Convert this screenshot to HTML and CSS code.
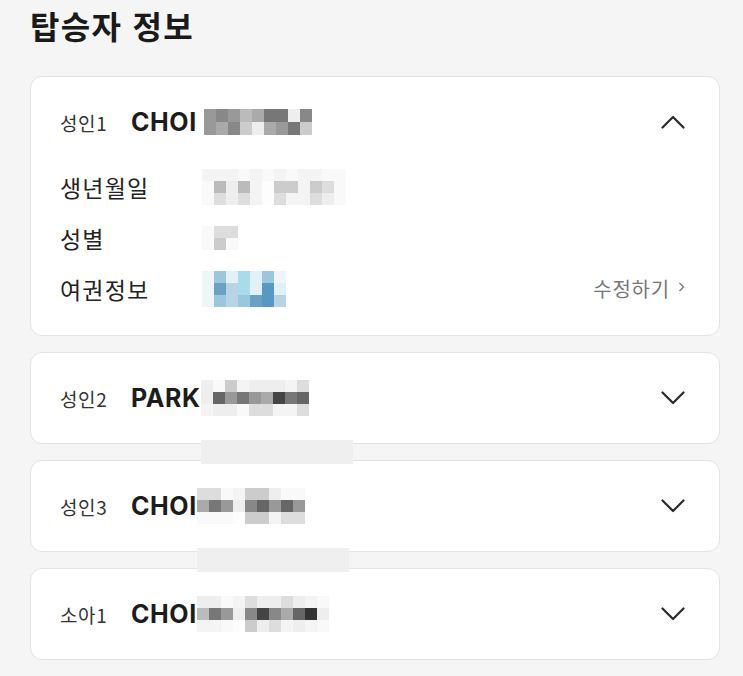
FILE: index.html
```html
<!DOCTYPE html>
<html lang="ko">
<head>
    <meta charset="UTF-8">
    <meta name="viewport" content="width=device-width, initial-scale=1.0">
    <title>탑승자 정보</title>
    <link rel="stylesheet" href="styles.css">
</head>
<body>
    <div class="page">
        <h1>탑승자 정보</h1>

        <div class="passengers">
            <div class="card open">
                <div class="cardHead">
                    <span class="type">성인1</span>
                    <span class="name">CHOI</span>
                    <span class="mosaic m9 gap">
                        <i class="p9"></i><i class="p8"></i><i class="p9"></i><i class="pb"></i><i class="pa"></i><i class="p7"></i><i class="p7"></i><i class="pe"></i><i class="p8"></i>
                        <i class="p9"></i><i class="pa"></i><i class="p8"></i><i class="pc"></i><i class="pe"></i><i class="pa"></i><i class="p9"></i><i class="p7"></i><i class="pc"></i>
                    </span>
                    <svg class="chevron" viewBox="0 0 24 14"><polyline points="1.5,12.5 12,2 22.5,12.5"/></svg>
                </div>
                <div class="details">
                    <div class="row">
                        <span class="label">생년월일</span>
                        <span class="mosaic m12 rows3">
                            <i class="pf"></i><i class="pf"></i><i class="pf"></i><i class="pw"></i><i class="pf"></i><i class="pw"></i><i class="pf"></i><i class="pw"></i><i class="pf"></i><i class="pf"></i><i class="pw"></i><i class="pw"></i>
                            <i class="pw"></i><i class="pb"></i><i class="pe"></i><i class="pb"></i><i class="pf"></i><i class="pww"></i><i class="pc"></i><i class="pc"></i><i class="pf"></i><i class="pc"></i><i class="pd"></i><i class="pw"></i>
                            <i class="pw"></i><i class="pd"></i><i class="pe"></i><i class="pd"></i><i class="pf"></i><i class="pww"></i><i class="pd"></i><i class="pf"></i><i class="pf"></i><i class="pd"></i><i class="pe"></i><i class="pw"></i>
                        </span>
                    </div>
                    <div class="row">
                        <span class="label">성별</span>
                        <span class="mosaic m3">
                            <i class="pw"></i><i class="pd"></i><i class="pd"></i>
                            <i class="pw"></i><i class="pc"></i><i class="pw"></i>
                        </span>
                    </div>
                    <div class="row">
                        <span class="label">여권정보</span>
                        <span class="mosaic m7 rows3">
                            <i class="b0"></i><i class="b2"></i><i class="b1"></i><i class="b3"></i><i class="b1"></i><i class="b2"></i><i class="b0"></i>
                            <i class="b0"></i><i class="b5"></i><i class="b4"></i><i class="b3"></i><i class="b1"></i><i class="b6"></i><i class="b1"></i>
                            <i class="b0"></i><i class="b2"></i><i class="b4"></i><i class="b2"></i><i class="b5"></i><i class="b6"></i><i class="b4"></i>
                        </span>
                        <a class="edit" href="#">수정하기
                            <svg viewBox="0 0 6 10"><polyline points="1,1 5,5 1,9"/></svg>
                        </a>
                    </div>
                </div>
            </div>

            <div class="card">
                <div class="cardHead">
                    <span class="type">성인2</span>
                    <span class="name">PARK</span>
                    <span class="mosaic m9 rows3 band">
                        <i class="pe"></i><i class="pw"></i><i class="pc"></i><i class="pf"></i><i class="pe"></i><i class="pe"></i><i class="pe"></i><i class="pf"></i><i class="pd"></i>
                        <i class="pe"></i><i class="p6"></i><i class="p9"></i><i class="p7"></i><i class="p9"></i><i class="pa"></i><i class="p4"></i><i class="p7"></i><i class="p6"></i>
                        <i class="pf"></i><i class="pe"></i><i class="pe"></i><i class="pw"></i><i class="pd"></i><i class="pd"></i><i class="pf"></i><i class="pf"></i><i class="pd"></i>
                    </span>
                    <svg class="chevron" viewBox="0 0 24 14"><polyline points="1.5,1.5 12,12 22.5,1.5"/></svg>
                </div>
            </div>

            <div class="card">
                <div class="cardHead">
                    <span class="type">성인3</span>
                    <span class="name">CHOI</span>
                    <span class="mosaic m9 rows3 band">
                        <i class="pd"></i><i class="pd"></i><i class="pw"></i><i class="pf"></i><i class="pc"></i><i class="pc"></i><i class="pe"></i><i class="pw"></i><i class="pw"></i>
                        <i class="pa"></i><i class="p7"></i><i class="p9"></i><i class="pe"></i><i class="p8"></i><i class="p6"></i><i class="p9"></i><i class="p6"></i><i class="p9"></i>
                        <i class="pw"></i><i class="pw"></i><i class="pw"></i><i class="pww"></i><i class="pc"></i><i class="pc"></i><i class="pf"></i><i class="pd"></i><i class="pd"></i>
                    </span>
                    <svg class="chevron" viewBox="0 0 24 14"><polyline points="1.5,1.5 12,12 22.5,1.5"/></svg>
                </div>
            </div>

            <div class="card">
                <div class="cardHead">
                    <span class="type">소아1</span>
                    <span class="name">CHOI</span>
                    <span class="mosaic m11 rows3">
                        <i class="pe"></i><i class="pe"></i><i class="pw"></i><i class="pf"></i><i class="pd"></i><i class="pe"></i><i class="pe"></i><i class="pd"></i><i class="pe"></i><i class="pf"></i><i class="pw"></i>
                        <i class="pb"></i><i class="p7"></i><i class="p9"></i><i class="pe"></i><i class="p8"></i><i class="p4"></i><i class="p8"></i><i class="pa"></i><i class="p6"></i><i class="p3"></i><i class="pe"></i>
                        <i class="pf"></i><i class="pf"></i><i class="pw"></i><i class="pww"></i><i class="pc"></i><i class="pe"></i><i class="pd"></i><i class="pf"></i><i class="pe"></i><i class="pf"></i><i class="pw"></i>
                    </span>
                    <svg class="chevron" viewBox="0 0 24 14"><polyline points="1.5,1.5 12,12 22.5,1.5"/></svg>
                </div>
            </div>
        </div>
    </div>
</body>
</html>
```

FILE: styles.css
```css
body {
    margin: 0;
    background-color: #f5f5f5;
    font-family: "Noto Sans CJK KR", "Noto Sans", sans-serif;
    color: #222;
}

.page {
    padding: 4px 23px 0 30px;
}

h1 {
    margin: 0;
    font-size: 32px;
    line-height: 42px;
    font-weight: 700;
    color: #1a1a1a;
    letter-spacing: 1.3px;
}

.passengers {
    margin-top: 30px;
    display: flex;
    flex-direction: column;
    gap: 16px;
}

.card {
    background-color: #fff;
    border: 1px solid #e3e3e3;
    border-radius: 12px;
    padding: 27px 34px 27px 29px;
}
.card.open {
    padding-bottom: 21px;
}

.cardHead {
    display: flex;
    align-items: center;
    height: 36px;
}

.type {
    width: 71px;
    font-size: 19px;
    letter-spacing: 0.6px;
    color: #333;
    flex-shrink: 0;
}

.name {
    font-family: Inter, "Liberation Sans", sans-serif;
    font-size: 25px;
    font-weight: 700;
    letter-spacing: 0.6px;
    color: #1c1c1c;
}

.chevron {
    margin-left: auto;
    width: 24px;
    height: 14px;
    fill: none;
    stroke: #2a2a2a;
    stroke-width: 2.2;
    stroke-linecap: round;
    stroke-linejoin: round;
}

/* blurred (mosaic) personal data */
.mosaic {
    display: inline-grid;
    grid-auto-rows: 13px;
    position: relative;
}
.mosaic.rows3 {
    grid-auto-rows: 12px;
}
.mosaic.gap {
    margin-left: 7px;
}
.mosaic i {
    display: block;
}
.m3 { grid-template-columns: repeat(3, 12px); grid-auto-rows: 12px; }
.m7 { grid-template-columns: repeat(7, 12px); }
.m9 { grid-template-columns: repeat(9, 12px); }
.m11 { grid-template-columns: repeat(11, 12px); }
.m12 { grid-template-columns: repeat(12, 12px); }

.band::after {
    content: "";
    position: absolute;
    left: 0;
    top: 60px;
    width: 152px;
    height: 24px;
    background-color: #efefef;
}

.p3 { background: #333; }
.p4 { background: #444; }
.p6 { background: #666; }
.p7 { background: #777; }
.p8 { background: #888; }
.p9 { background: #999; }
.pa { background: #aaa; }
.pb { background: #bbb; }
.pc { background: #ccc; }
.pd { background: #ddd; }
.pe { background: #eee; }
.pf { background: #f4f4f4; }
.pw { background: #f9f9f9; }
.pww { background: #fdfdfd; }

.b0 { background: #eef6fa; }
.b1 { background: #e2f1f7; }
.b2 { background: #9cc6dc; }
.b3 { background: #a8dcea; }
.b4 { background: #b8d4e4; }
.b5 { background: #6aa2c4; }
.b6 { background: #5a98c4; }

.details {
    margin-top: 21px;
}

.row {
    display: flex;
    align-items: center;
    height: 51px;
}

.label {
    width: 142px;
    font-size: 23px;
    letter-spacing: 1.2px;
    color: #222;
}

.edit {
    margin-left: auto;
    display: flex;
    align-items: center;
    gap: 8px;
    font-size: 20px;
    letter-spacing: 0.8px;
    color: #777;
    text-decoration: none;
}
.edit svg {
    width: 7px;
    height: 10px;
    fill: none;
    stroke: #777;
    stroke-width: 1.4;
    margin-top: -4px;
}
```
